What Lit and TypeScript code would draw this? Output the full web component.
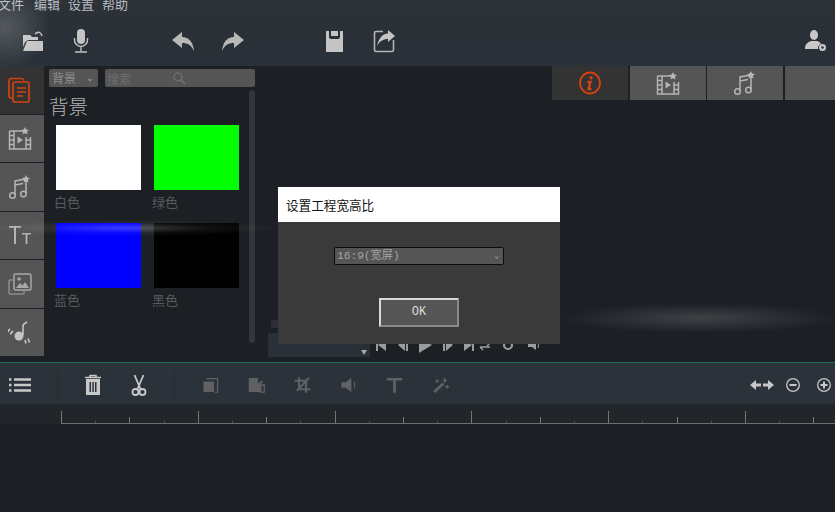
import { LitElement, html, css, svg } from "lit";
import { customElement } from "lit/decorators.js";

const I = (w: number, h: number, body: unknown, cls = "") =>
  html`<svg class="ic ${cls}" viewBox="0 0 ${w} ${h}" width=${w} height=${h}>${body}</svg>`;

const folder = I(24, 24, svg`
  <path fill="#c4c4c4" d="M2 6h7l2 2h6v3H7l-3 2v0L2 18zM2 22l4-10h16v10z"/>
  <path fill="none" stroke="#c4c4c4" stroke-width="1.4" d="M14 5c3-3 6-2 7 2"/>`);
const mic = I(24, 26, svg`
  <rect x="8" y="1" width="8" height="15" rx="4" fill="#c4c4c4"/>
  <path fill="none" stroke="#c4c4c4" stroke-width="1.4" d="M5.500 10v2a6.500 6.500 0 0 0 13 0v-2M12 19v4M6 24h12"/>`);
const undo = I(24, 22, svg`<path fill="#b8b8b8" d="M1 10 11 2v5c7 0 11 5 12 14-3-6-6-8-12-8v5z"/>`);
const redo = I(24, 22, svg`<path fill="#b8b8b8" d="M23 10 13 2v5C6 7 2 12 1 21c3-6 6-8 12-8v5z"/>`);
const save = I(24, 24, svg`<path fill="#c4c4c4" fill-rule="evenodd" d="M4 2h17v21H4zM7 2v6q0 2 2 2h7q2 0 2-2V2h-2v5H9V2z"/>`);
const share = I(24, 24, svg`
  <path fill="none" stroke="#b4b4b4" stroke-width="1.600" d="M11 2.500H4q-1.500 0-1.500 1.500v17q0 1.500 1.500 1.500h16q1.500 0 1.500-1.500v-10"/>
  <path fill="#c4c4c4" d="M23 7 16 1v3.500C10 5 7 9 5 17c3-5 6-7 11-7v3z"/>`);
const user = I(24, 24, svg`
  <ellipse cx="11" cy="6" rx="4" ry="5" fill="#c8c8c8"/>
  <path fill="#c8c8c8" d="M2 20c0-5 3-7 6-8h6c2 .5 3 1 4 3a5 5 0 0 0-3 5z"/>
  <circle cx="19.500" cy="18.500" r="3.500" fill="#c8c8c8"/><circle cx="19.500" cy="18.500" r="1.300" fill="#2b323a"/>`);
const star = (x: number, y: number) => svg`<path fill="#b8b8b8" d="M${x} ${y - 4}l1.200 2.600 2.800.3-2.100 1.900.6 2.800-2.500-1.400-2.500 1.400.6-2.800-2.100-1.900 2.800-.3z"/>`;
const film = (c = "#b4b4b4") => I(24, 24, svg`
  <path fill="none" stroke=${c} stroke-width="1.500" d="M1.500 5h14M22.500 11v12h-21V5M6 5v18M18 11v12M1.500 9.500H6M1.500 14H6M1.500 18.500H6M18 14h4.500M18 18.500h4.500"/>
  <path fill=${c} d="M9.500 10.500 15 14l-5.500 3.500z"/>${star(17, 5)}`);
const note = I(24, 26, svg`
  <path fill="none" stroke="#b4b4b4" stroke-width="1.500" d="M7 21V7l11-2v15M7 11l8-1.500"/>
  <circle cx="4.500" cy="21.500" r="2.800" fill="none" stroke="#b4b4b4" stroke-width="1.500"/>
  <circle cx="15.500" cy="20" r="2.800" fill="none" stroke="#b4b4b4" stroke-width="1.500"/>${star(18, 5)}`);
const pages = I(24, 26, svg`
  <path fill="none" stroke="#d4420f" stroke-width="1.700" d="M4 21q-3 0-3-2V4q0-2.500 2.500-2.500h10q2 0 2.500 2"/>
  <rect x="5" y="5" width="16" height="20" rx="2" fill="#333" stroke="#d4420f" stroke-width="1.700"/>
  <path stroke="#d4420f" stroke-width="1.700" d="M9 11h9M9 15h9M9 19h6"/>`);
const tt = I(24, 22, svg`
  <path fill="#b4b4b4" d="M1 2h12v1.800H8V20H6V3.800H1zM14 9h9v1.600h-3.600V20h-1.800v-9.400H14z"/>`);
const media = I(24, 24, svg`
  <path fill="none" stroke="#8c8c8c" stroke-width="1.500" d="M5 8H2q-1 0-1 1v12q0 1 1 1h13q1 0 1-1v-2"/>
  <rect x="6" y="2" width="17" height="16" rx="1.500" fill="#555" stroke="#a8a8a8" stroke-width="1.500"/>
  <circle cx="11" cy="7" r="1.800" fill="#a8a8a8"/><path fill="#a8a8a8" d="M8 16l4-5 2.500 2.500L17 10l4 6z"/>`);
const voice = I(24, 24, svg`
  <circle cx="11" cy="16" r="4.500" fill="#c4c4c4"/>
  <path fill="none" stroke="#c4c4c4" stroke-width="1.600" d="M15 15V6c0-2 2-3 4-4M5 11q-2 1.500-2.500 3.500M2 9q-1.500 1-2 3M17 20l1 3.500M20 18.500l1.500 4"/>`);
const info = I(24, 24, svg`
  <ellipse cx="12" cy="12" rx="10" ry="10.500" fill="none" stroke="#d4420f" stroke-width="1.800"/>
  <circle cx="13" cy="6.800" r="1.700" fill="#d4420f"/>
  <path fill="none" stroke="#d4420f" stroke-width="2.400" d="M9.500 11h3l-2 7h3"/>`);
const list = I(24, 18, svg`<path stroke="#c8c8c8" stroke-width="2.600" d="M1 3.500h2.500M6 3.500h17M1 9h2.500M6 9h17M1 14.500h2.500M6 14.500h17"/>`);
const trash = I(24, 22, svg`
  <path fill="#c8c8c8" fill-rule="evenodd" d="M5 5h14v16H5zM8.500 8v10h1.500V8zM11.300 8v10h1.500V8zM14 8v10h1.500V8z"/>
  <path fill="none" stroke="#c8c8c8" stroke-width="1.500" d="M4 3.500h16M9 3.500V1.500h6v2"/>`);
const scissors = I(24, 22, svg`
  <path fill="none" stroke="#c8c8c8" stroke-width="1.800" d="M7.500 1l6 14M16.500 1l-6 14"/>
  <circle cx="8.500" cy="18" r="3" fill="none" stroke="#c8c8c8" stroke-width="1.800"/>
  <circle cx="15.500" cy="18" r="3" fill="none" stroke="#c8c8c8" stroke-width="1.800"/>`);
const d = "#5f6163";
const copyIc = I(24, 22, svg`<path fill="none" stroke=${d} stroke-width="1.800" d="M6 2h16v19h-4"/><rect x="2" y="6" width="15" height="15" rx="1" fill=${d}/>`, "sm");
const pasteIc = I(24, 22, svg`<path fill=${d} d="M1 1h13v7h5v13H1z"/><path fill="none" stroke=${d} stroke-width="1.800" d="M16 7h5M16 11h7v10h-7"/><rect x="18" y="5" width="2" height="3" fill=${d}/>`, "sm");
const crop = I(24, 22, svg`<path fill="none" stroke=${d} stroke-width="3" d="M7 0v17h16M1 5h16v17M4 19 21 1"/>`, "sm");
const vol = I(24, 22, svg`<path fill=${d} d="M2 7h6l8-6v20l-8-6H2z"/><path fill="none" stroke=${d} stroke-width="1.500" d="M20 6q2 5 0 10"/>`, "sm");
const textT = I(24, 22, svg`<path fill=${d} d="M1 1h22v3.500h-9V22h-4V4.500H1z"/>`, "sm");
const wand = I(24, 22, svg`<path stroke=${d} stroke-width="4" d="M3 21 16 9"/><path stroke=${d} stroke-width="2" d="M18 1v7M15 4.500h6M7 3v5M5 5.500h5M21 11v5M19 13.500h5"/>`, "sm");
const arrows = I(24, 14, svg`<path fill="#c8c8c8" d="M0 7l6-5v3.500h5v3H6V12zM24 7l-6-5v3.500h-5v3h5V12z"/>`);
const minus = I(16, 16, svg`<circle cx="8" cy="8" r="6.300" fill="none" stroke="#c8c8c8" stroke-width="1.300"/><path stroke="#c8c8c8" stroke-width="2" d="M4.500 8h7"/>`);
const plus = I(16, 16, svg`<circle cx="8" cy="8" r="6.300" fill="none" stroke="#c8c8c8" stroke-width="1.300"/><path stroke="#c8c8c8" stroke-width="2" d="M4.500 8h7M8 4.500v7"/>`);
const c = "#9c9c9c";
const transport = [
  I(12, 14, svg`<path fill=${c} d="M1 1h2v12H1zM11 1v12L3 7z"/>`),
  I(12, 14, svg`<path fill=${c} d="M1 7l7-6v12zM9 1h2v12H9z"/>`),
  I(14, 18, svg`<path fill=${c} d="M1 1l13 8-13 8z"/>`),
  I(12, 14, svg`<path fill=${c} d="M1 1h2v12H1zM4 1l7 6-7 6z"/>`),
  I(12, 14, svg`<path fill=${c} d="M1 1l8 6-8 6zM9 1h2v12H9z"/>`),
  I(14, 14, svg`<path fill="none" stroke=${c} stroke-width="1.500" d="M1 5h12M3 9h10M1 5l3-3M13 5l-3 3M3 9l3 3"/>`),
  I(14, 14, svg`<circle cx="7" cy="7" r="4" fill="none" stroke=${c} stroke-width="2.200"/>`),
  I(14, 14, svg`<path fill=${c} d="M1 5h4l4-3v10L5 9H1z"/><path stroke=${c} d="M12 5l-1 5"/>`),
];

const ticks = Array.from({ length: 23 }, (_, k) => {
  const x = Math.round(61 + k * 34.2) + 0.5;
  const h = k % 4 === 0 ? 12 : k % 2 === 0 ? 6 : 2;
  const col = k % 2 ? "#555" : "#777";
  return svg`<line x1=${x} x2=${x} y1=${19 - h} y2="19" stroke=${col} />`;
});

const swatches = [
  ["白色", "#ffffff"],
  ["绿色", "#00ff00"],
  ["蓝色", "#0000ff"],
  ["黑色", "#000000"],
];

@customElement("app-root")
export class AppRoot extends LitElement {
  static styles = css`
    :host { display: block; width: 835px; height: 512px; position: relative; overflow: hidden;
      background: #1c1f24; font-family: "Noto Sans CJK SC", "Liberation Sans", sans-serif; }
    .ic { display: block; flex: none; }
    .ic.sm { width: 17px; height: 16px; }
    .top { height: 66px; background: linear-gradient(#2c3238, #2a3037 60%, #2a3139); overflow: hidden; }
    .menu { display: flex; gap: 8px; height: 12px; margin-left: -2px; font-size: 13px; line-height: 13px;
      color: #b8bcc0; align-items: flex-end; }
    .menu span { display: block; position: relative; top: -2px; }
    .menu span:first-child { margin-right: 2px; }
    .tools { display: flex; align-items: center; height: 54px; padding: 4px 8px 0 21px; box-sizing: border-box; }
    .grp { display: flex; align-items: center; }
    .g1 { gap: 24px; }
    .g2 { gap: 26px; margin-left: 78px; }
    .g3 { gap: 26px; margin-left: 77px; }
    .g4 { margin-left: auto; }
    .main { display: flex; height: 296px; }
    .rail { width: 44px; flex: none; display: flex; flex-direction: column; gap: 1px; }
    .tab { height: 47.500px; background: #555; display: flex; align-items: center; justify-content: center; padding-right: 4px; box-sizing: border-box; }
    .tab.on { background: #333; }
    .panel { width: 213px; flex: none; box-sizing: border-box; padding: 3px 0 0 5px; position: relative; }
    .search { display: flex; gap: 7px; height: 18px; }
    .sel { width: 49px; background: #555; border-radius: 2px; color: #8e8e8e; font-size: 12px; line-height: 17px;
      padding-left: 3px; box-sizing: border-box; display: flex; justify-content: space-between; }
    .sel i { font-style: normal; color: #aaa; font-size: 9px; padding-right: 4px; }
    .find { width: 150px; background: #555; border-radius: 2px; color: #6e6e6e; font-size: 12px; line-height: 17px;
      padding-left: 2px; box-sizing: border-box; display: flex; gap: 41px; align-items: center; }
    h2 { margin: 6px 0 0 0; font-weight: 300; font-size: 19.500px; line-height: 26px; color: #b4b4b4; height: 26px; letter-spacing: 0; }
    .grid { display: grid; grid-template-columns: 85px 85px; column-gap: 13px; row-gap: 9px; margin: 6px 0 0 7px; }
    .sw { height: 65px; }
    .lab { margin: 3px 0 0 -2px; font-size: 13px; line-height: 18px; height: 21px; color: #585b5e; }
    .scroll { position: absolute; left: 205px; top: 24px; width: 6px; height: 253px; background: #33363a; border-radius: 3px; }
    .preview { flex: 1; position: relative; display: flex; flex-direction: column; justify-content: flex-end; padding-bottom: 5px; box-sizing: border-box; }
    .mark { width: 8px; height: 8px; background: #2c3036; margin-left: 14px; margin-bottom: 5px; }
    .pbar { display: flex; align-items: center; padding-left: 11px; height: 24px; }
    .psel { width: 102px; height: 24px; background: #2a3038; flex: none; display: flex; align-items: flex-end; justify-content: flex-end; }
    .psel i { font-style: normal; color: #aaa; font-size: 6px; line-height: 11px; padding-right: 3px; }
    .ctrl { display: flex; gap: 9.500px; margin-left: 5px; align-items: center; }
    .ctrl .ic:nth-child(6) { margin-left: -8px; }
    .ctrl .ic:nth-child(7) { margin-left: 1px; }
    .ctrl .ic:nth-child(8) { margin-left: 2px; }
    .right { width: 283px; flex: none; }
    .rtabs { display: flex; height: 34px; gap: 2px; }
    .rtab { width: 76px; background: #555; display: flex; align-items: center; justify-content: center; }
    .rtab.on { background: #333; }
    .rtab.tight { margin-left: -1px; }
    .rtab.end { flex: 1; }
    .line { height: 1px; background: #1c6a5e; }
    .tl { height: 41px; background: #2b323a; display: flex; align-items: center; padding: 2px 0 0 8px; box-sizing: border-box; }
    .sep { width: 1px; height: 28px; background: #262b31; flex: none; }
    .s1 { margin: 0 23px 0 25px; }
    .s2 { margin: 0 27px 0 23px; }
    .tg { display: flex; gap: 22px; align-items: center; }
    .tg.wide { gap: 29px; }
    .zoom { margin-left: auto; display: flex; align-items: center; gap: 11px; padding-right: 3px; }
    .zoom .ic:nth-child(3) { margin-left: 4px; }
    .ruler { height: 20px; background: #22262b; }
    .ruler svg { display: block; }
    .dlg { position: absolute; left: 278px; top: 187px; width: 282px; height: 157px; background: #3a3a3a; z-index: 3; }
    .dt { height: 35px; background: #fff; color: #111; font-size: 12.600px; line-height: 35px; padding-left: 8px; }
    .dbody { display: flex; flex-direction: column; align-items: center; padding-top: 25px; }
    .dsel { width: 170px; height: 18px; box-sizing: border-box; background: #555; border: 1px solid #0c0c0c; border-radius: 2px;
      color: #a4a4a4; font-family: "Liberation Mono", "Noto Sans CJK SC", monospace; font-size: 11.200px; line-height: 16px; padding-left: 2px;
      display: flex; justify-content: space-between; }
    .dsel i { font-style: normal; font-size: 8px; color: #aaa; padding-right: 4px; }
    .ok { margin-top: 33px; width: 80px; height: 29px; box-sizing: border-box; background: #555; border: 2px solid; border-color: #d8d8d8 #8a8a8a #8a8a8a #d8d8d8;
      color: #ddd; font-family: "Liberation Mono", monospace; font-size: 12px; line-height: 25px; text-align: center; }
    .glow { position: absolute; pointer-events: none; z-index: 2; }
    .gl1 { left: -40px; top: -15px; width: 90px; height: 85px; background: radial-gradient(closest-side, rgba(255,255,255,.2), rgba(255,255,255,0)); }
    .gl2 { left: -20px; top: 220px; width: 300px; height: 16px; background: radial-gradient(closest-side, rgba(255,255,255,.24), rgba(255,255,255,.06) 55%, rgba(255,255,255,0)); }
    .gl3 { left: 560px; top: 303px; width: 280px; height: 30px; background: radial-gradient(closest-side, rgba(255,255,255,.15), rgba(255,255,255,0)); }
  `;

  render() {
    return html`
      <div class="top">
        <div class="menu"><span>文件</span><span>编辑</span><span>设置</span><span>帮助</span></div>
        <div class="tools">
          <div class="grp g1">${folder}${mic}</div>
          <div class="grp g2">${undo}${redo}</div>
          <div class="grp g3">${save}${share}</div>
          <div class="grp g4">${user}</div>
        </div>
      </div>
      <div class="main">
        <div class="rail">
          <div class="tab on">${pages}</div>
          <div class="tab">${film()}</div>
          <div class="tab">${note}</div>
          <div class="tab">${tt}</div>
          <div class="tab">${media}</div>
          <div class="tab">${voice}</div>
        </div>
        <div class="panel">
          <div class="search">
            <div class="sel">背景<i>⌄</i></div>
            <div class="find">搜索
              <svg class="ic" width="14" height="14" viewBox="0 0 14 14"><circle cx="6" cy="6" r="4" fill="none" stroke="#6e6e6e" stroke-width="1.500"/><path stroke="#6e6e6e" stroke-width="2" d="M9 9l4 4"/></svg>
            </div>
          </div>
          <h2>背景</h2>
          <div class="grid">
            ${swatches.map(
              ([n, col]) => html`<div>
                <div class="sw" style="background:${col}"></div>
                <div class="lab">${n}</div>
              </div>`
            )}
          </div>
          <div class="scroll"></div>
        </div>
        <div class="preview">
          <div class="mark"></div>
          <div class="pbar">
            <div class="psel"><i>▼</i></div>
            <div class="ctrl">${transport}</div>
          </div>
        </div>
        <div class="right">
          <div class="rtabs">
            <div class="rtab on">${info}</div>
            <div class="rtab">${film()}</div>
            <div class="rtab tight">${note}</div>
            <div class="rtab end"></div>
          </div>
        </div>
      </div>
      <div class="line"></div>
      <div class="tl">
        ${list}
        <div class="sep s1"></div>
        <div class="tg">${trash}${scissors}</div>
        <div class="sep s2"></div>
        <div class="tg wide">${copyIc}${pasteIc}${crop}${vol}${textT}${wand}</div>
        <div class="zoom">${arrows}${minus}${plus}</div>
      </div>
      <div class="ruler">
        <svg width="835" height="20"><line x1="61" x2="835" y1="19.500" y2="19.500" stroke="#6e6e6e"/>${ticks}</svg>
      </div>
      <div class="dlg">
        <div class="dt">设置工程宽高比</div>
        <div class="dbody">
          <div class="dsel"><span>16:9(宽屏)</span><i>⌄</i></div>
          <div class="ok">OK</div>
        </div>
      </div>
      <div class="glow gl1"></div>
      <div class="glow gl2"></div>
      <div class="glow gl3"></div>
    `;
  }
}
